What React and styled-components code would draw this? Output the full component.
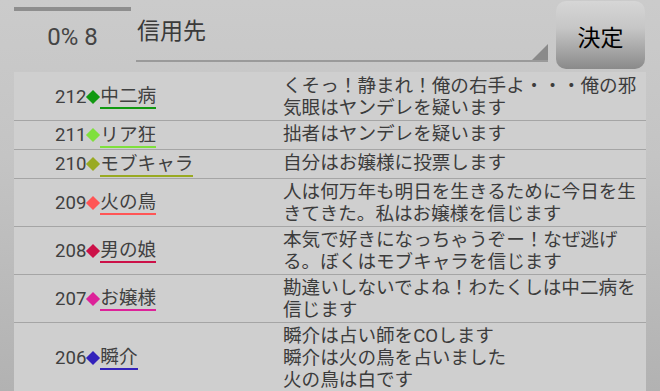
import React from "react";
import styled, { createGlobalStyle } from "styled-components";

const Global = createGlobalStyle`
  html, body { margin: 0; padding: 0; height: 391px; overflow: hidden; }
  body {
    background: linear-gradient(#cbcbcb, #c4c4c4 40%, #b2b2b2);
    font-family: Roboto, "Noto Sans CJK JP", sans-serif;
    color: #404040;
  }
`;

const Page = styled.div`
  width: 660px;
  height: 391px;
  overflow: hidden;
  display: flex;
  flex-direction: column;
`;

const Header = styled.div`
  display: flex;
  align-items: flex-start;
  height: 72px;
  flex: none;
  padding-left: 14px;
`;

const Counter = styled.div`
  width: 117px;
  padding-top: 7px;
  display: flex;
  flex-direction: column;
  align-items: center;
`;

const Bar = styled.div`
  align-self: stretch;
  height: 4px;
  background: #8e8e8e;
`;

const CounterText = styled.div`
  margin-top: 12px;
  font-size: 24px;
  line-height: 28px;
  color: #444;
`;

const Field = styled.div`
  position: relative;
  margin-left: 5px;
  width: 412px;
  height: 60px;
  border-bottom: 2px solid #9a9a9a;
  box-sizing: content-box;
`;

const FieldText = styled.div`
  padding: 18px 0 0 1px;
  font-size: 23px;
  line-height: 28px;
  color: #3a3a3a;
`;

const Corner = styled.div`
  position: absolute;
  right: 0;
  bottom: 0;
  width: 0;
  height: 0;
  border-left: 16px solid transparent;
  border-bottom: 16px solid #8a8a8a;
`;

const Button = styled.button`
  margin: 1px 0 0 8px;
  width: 89px;
  height: 68px;
  border: none;
  border-radius: 10px;
  background: linear-gradient(#d6d6d6, #c6c6c6 40%, #8a8a8a);
  font-family: Roboto, "Noto Sans CJK JP", sans-serif;
  font-size: 23px;
  color: #000;
  padding: 0;
  padding-top: 2px;
`;

const List = styled.div`
  flex: 1;
  margin-left: 14px;
  width: 632px;
  background: #cfcfcf;
  padding-top: 1px;
`;

const Row = styled.div`
  display: grid;
  grid-template-columns: 269px 1fr;
  padding: 1.5px 0;
  border-bottom: 1px solid #a5a5a5;
  font-size: 18.6px;
  line-height: 22px;
`;

const Who = styled.div`
  display: flex;
  align-items: center;
  padding-left: 41px;
`;

const Diamond = styled.span`
  display: inline-block;
  width: 10px;
  height: 10px;
  margin: 0 2px 0 2px;
  transform: rotate(45deg);
  background: ${(p) => p.$c};
`;

const Name = styled.span`
  display: inline-block;
  line-height: 21px;
  margin-top: 2px;
  border-bottom: 2px solid ${(p) => p.$c};
`;

const Says = styled.div`
  white-space: pre-line;
  color: #3c3c3c;
`;

const rows = [
  { n: 212, name: "中二病", c: "#119911", t: "くそっ！静まれ！俺の右手よ・・・俺の邪気眼はヤンデレを疑います" },
  { n: 211, name: "リア狂", c: "#7fe03c", t: "拙者はヤンデレを疑います" },
  { n: 210, name: "モブキャラ", c: "#99aa22", t: "自分はお嬢様に投票します" },
  { n: 209, name: "火の鳥", c: "#ff5555", t: "人は何万年も明日を生きるために今日を生きてきた。私はお嬢様を信じます" },
  { n: 208, name: "男の娘", c: "#cc1148", t: "本気で好きになっちゃうぞー！なぜ逃げる。ぼくはモブキャラを信じます" },
  { n: 207, name: "お嬢様", c: "#dd2299", t: "勘違いしないでよね！わたくしは中二病を信じます" },
  { n: 206, name: "瞬介", c: "#3322bb", t: "瞬介は占い師をCOします\n瞬介は火の鳥を占いました\n火の鳥は白です" },
];

export default function App() {
  return (
    <Page>
      <Global />
      <Header>
        <Counter>
          <Bar />
          <CounterText>0% 8</CounterText>
        </Counter>
        <Field>
          <FieldText>信用先</FieldText>
          <Corner />
        </Field>
        <Button>決定</Button>
      </Header>
      <List>
        {rows.map((r) => (
          <Row key={r.n}>
            <Who>
              <span>{r.n}</span>
              <Diamond $c={r.c} />
              <Name $c={r.c}>{r.name}</Name>
            </Who>
            <Says>{r.t}</Says>
          </Row>
        ))}
      </List>
    </Page>
  );
}
